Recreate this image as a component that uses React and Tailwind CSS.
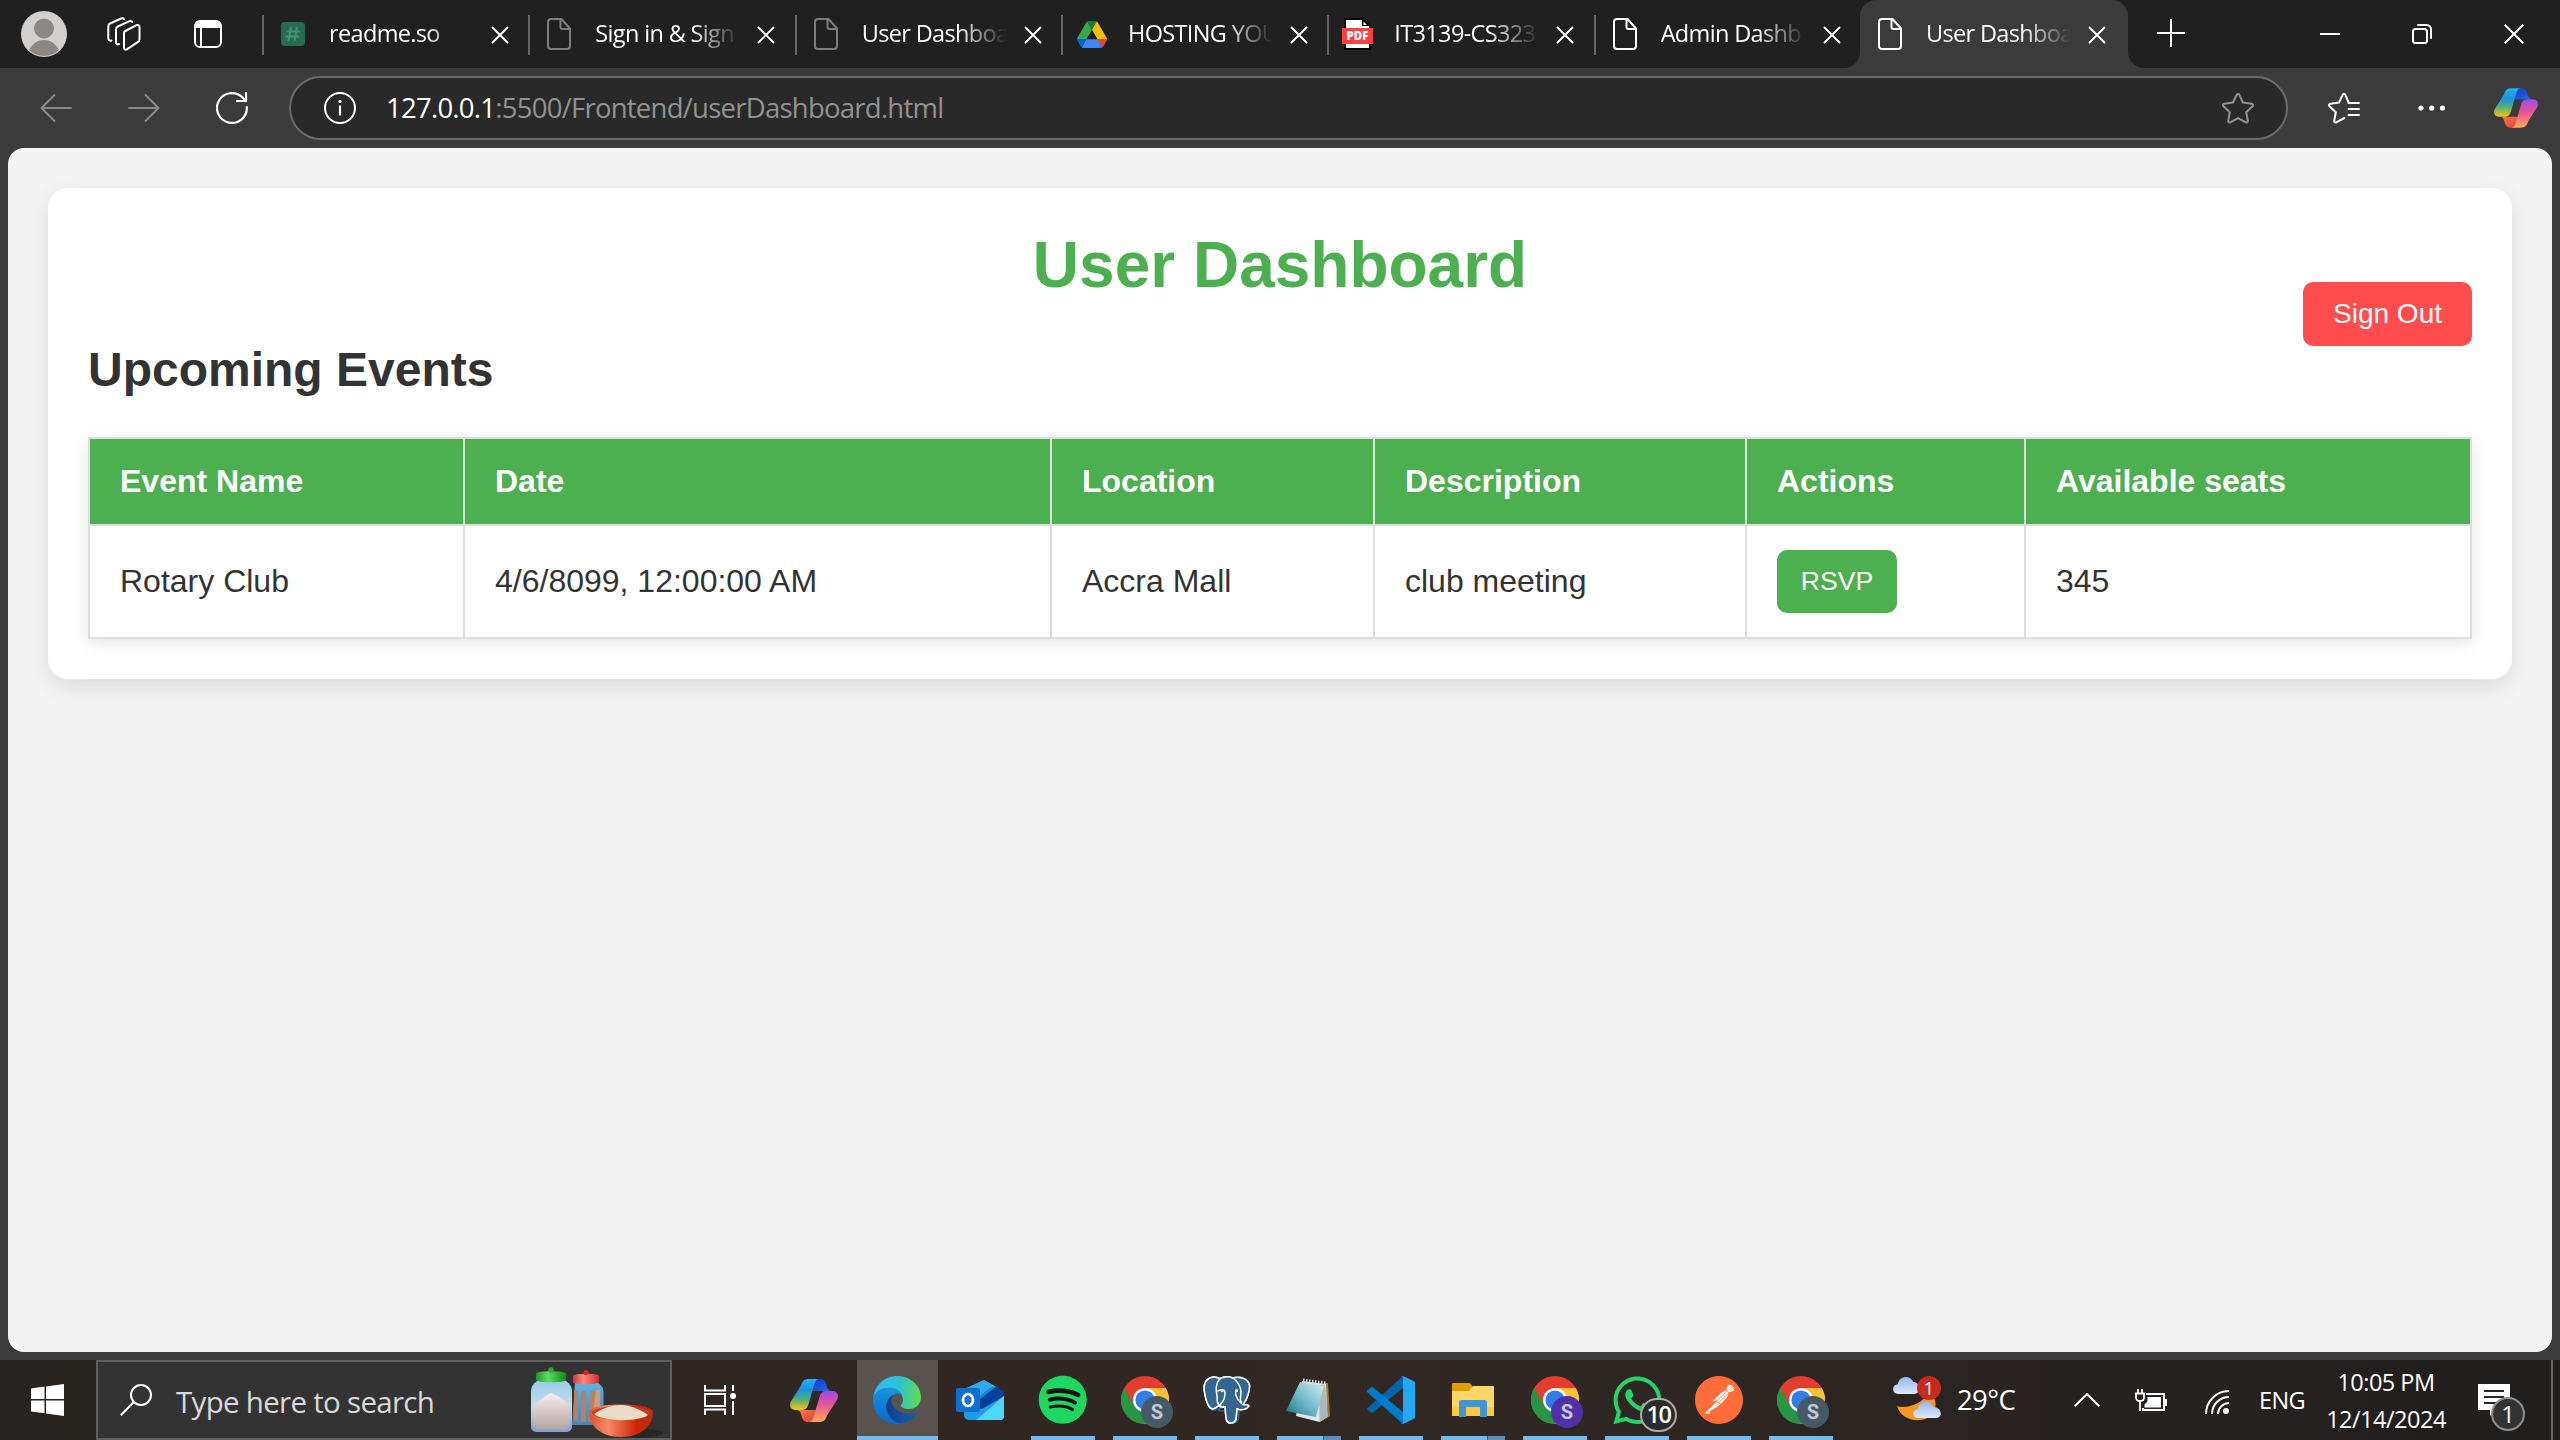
import React from "react";
import { FaSpotify, FaWhatsapp } from "react-icons/fa";
import { SiPostgresql, SiPostman } from "react-icons/si";

const ui = "font-['Open_Sans','Noto_Sans',sans-serif]";

/* ---------- browser icons ---------- */

const CloseIcon = ({ size = 18 }) => (
  <svg width={size} height={size} viewBox="0 0 18 18" fill="none" stroke="#fff" strokeWidth="1.9" strokeLinecap="round">
    <path d="M1.5 1.5l15 15M16.5 1.5l-15 15" />
  </svg>
);

const PageIcon = ({ color }) => (
  <svg width="24" height="32" viewBox="0 0 24 32" fill="none" stroke={color} strokeWidth="2" strokeLinejoin="round">
    <path d="M4 1h10.5L23 10.500V28a3 3 0 0 1-3 3H4a3 3 0 0 1-3-3V4a3 3 0 0 1 3-3z" />
    <path d="M13.500 1v8a2 2 0 0 0 2 2H23" />
  </svg>
);

const ReadmeIcon = () => (
  <svg width="24" height="24" viewBox="0 0 24 24">
    <rect width="24" height="24" rx="4" fill="#286b53" />
    <path d="M10 5L7.500 19M16 5l-2.500 14M5.500 9.500h13.500M4.500 14.500H18" stroke="#3f9273" strokeWidth="2.200" />
  </svg>
);

const DriveIcon = () => (
  <svg width="30" height="27" viewBox="0 0 87.3 78" className="shrink-0">
    <path d="m6.600 66.850 3.850 6.650c.8 1.400 1.950 2.500 3.300 3.300l13.750-23.800h-27.500c0 1.550.4 3.100 1.200 4.500z" fill="#0066da" />
    <path d="m43.650 25-13.750-23.800c-1.350.8-2.500 1.900-3.300 3.300l-25.400 44a9.060 9.060 0 0 0 -1.200 4.500h27.500z" fill="#34a853" />
    <path d="m73.550 76.800c1.350-.8 2.500-1.900 3.300-3.300l1.600-2.750 7.650-13.250c.8-1.400 1.200-2.950 1.200-4.500h-27.502l5.852 11.500z" fill="#ea4335" />
    <path d="m43.650 25 13.750-23.800c-1.350-.8-2.900-1.200-4.500-1.200h-18.500c-1.600 0-3.150.45-4.500 1.200z" fill="#188038" />
    <path d="m59.800 53h-32.300l-13.750 23.800c1.350.8 2.900 1.200 4.500 1.200h50.800c1.600 0 3.150-.45 4.500-1.200z" fill="#4285f4" />
    <path d="m73.400 26.500-12.700-22c-.8-1.400-1.950-2.500-3.300-3.300l-13.750 23.800 16.150 28h27.450c0-1.550-.4-3.100-1.200-4.500z" fill="#fbbc04" />
  </svg>
);

const PdfIcon = () => (
  <svg width="32" height="32" viewBox="0 0 32 32" className="shrink-0">
    <path d="M2 0h19l8 8v24H2z" fill="#000" />
    <path d="M4 2h16v6h7v22H4z" fill="#fff" />
    <path d="M21.500 3.500v3.500H25z" fill="#fff" />
    <rect x="0" y="10" width="31" height="16" fill="#ff4040" />
    <text x="15.5" y="22.300" textAnchor="middle" fontFamily="Open Sans, sans-serif" fontWeight="800" fontSize="11.500" fill="#fff">PDF</text>
  </svg>
);

const WorkspacesIcon = () => (
  <svg width="34" height="34" viewBox="0 0 34 34" fill="none" stroke="#fff" strokeWidth="2" strokeLinejoin="round" strokeLinecap="round">
    <path d="M17.500 14.500l12-6.300c1.800-.8 3 .2 3 2v12c0 1.500-.6 2.400-1.800 3l-10.500 7c-1.700 1-3.200.3-3.200-1.700V16c0-.6.200-1 .5-1.500z" />
    <path d="M12 27c-2 .8-3-.2-3-2V12.500c0-1.500.6-2.400 1.800-3L22.500 4.200c1.200-.5 2.300-.2 2.800.8" />
    <path d="M4.500 23.500c-2 .6-3.200-.4-3.200-2.200V9.500c0-1.500.6-2.400 1.800-3L14 1.500c1.200-.6 2.500-.2 3 .8" />
  </svg>
);

const TabActionsIcon = () => (
  <svg width="28" height="28" viewBox="0 0 28 28">
    <rect x="1" y="1" width="26" height="26" rx="5" fill="none" stroke="#fff" strokeWidth="2" />
    <path d="M1 8V5a4 4 0 0 1 4-4h18a4 4 0 0 1 4 4v3z" fill="#fff" />
    <path d="M7 8v19" stroke="#fff" strokeWidth="2" />
  </svg>
);

const CopilotIcon = ({ width, height }) => (
  <svg width={width} height={height} viewBox="0 0 48 43">
    <defs>
      <linearGradient id="cpLeft" x1="0" y1="0" x2="0" y2="1">
        <stop offset="0" stopColor="#2bb0f5" />
        <stop offset=".35" stopColor="#1593e0" />
        <stop offset=".65" stopColor="#4fae7d" />
        <stop offset="1" stopColor="#f6c80c" />
      </linearGradient>
      <linearGradient id="cpTop" x1="0" y1="0" x2="1" y2="1">
        <stop offset="0" stopColor="#0b3bbf" />
        <stop offset="1" stopColor="#2a6bf0" />
      </linearGradient>
      <linearGradient id="cpRight" x1="0" y1="1" x2="0" y2="0">
        <stop offset="0" stopColor="#9a4be8" />
        <stop offset=".45" stopColor="#e65596" />
        <stop offset="1" stopColor="#fdac55" />
      </linearGradient>
      <linearGradient id="cpBottom" x1="0" y1="0" x2="1" y2="1">
        <stop offset="0" stopColor="#e23c3c" />
        <stop offset="1" stopColor="#fb8048" />
      </linearGradient>
    </defs>
    <path d="M25 0h5.500c3 0 4.700 1.800 5.500 4.500l1.200 4c.6 2.200 2 3.500 4.800 3.500H22z" fill="url(#cpTop)" />
    <path d="M11 6.500C12.300 2 14.500 0 19 0h11c-3.500 0-4.700 2-5.700 5.500L18.500 25c-1.200 4.300-3.200 6-7 6H6C1 31-.8 27.800.5 23z" fill="url(#cpLeft)" />
    <g transform="rotate(180 24 21.500)">
      <path d="M25 0h5.500c3 0 4.700 1.800 5.500 4.500l1.200 4c.6 2.200 2 3.500 4.800 3.500H22z" fill="url(#cpBottom)" />
      <path d="M11 6.500C12.300 2 14.500 0 19 0h11c-3.500 0-4.700 2-5.700 5.500L18.500 25c-1.200 4.300-3.200 6-7 6H6C1 31-.8 27.800.5 23z" fill="url(#cpRight)" />
    </g>
  </svg>
);

/* ---------- taskbar icons ---------- */

const EdgeIcon = () => (
  <svg width="48" height="48" viewBox="0 0 48 48">
    <defs>
      <linearGradient id="edTop" x1="0" y1=".5" x2="1" y2=".6">
        <stop offset="0" stopColor="#35b8f1" />
        <stop offset=".5" stopColor="#2bc3d2" />
        <stop offset="1" stopColor="#62dc4b" />
      </linearGradient>
      <linearGradient id="edLeft" x1="0" y1="0" x2="0" y2="1">
        <stop offset="0" stopColor="#1a93dd" />
        <stop offset="1" stopColor="#0669cf" />
      </linearGradient>
      <linearGradient id="edDark" x1="0" y1="0" x2="1" y2="0">
        <stop offset="0" stopColor="#123f86" />
        <stop offset="1" stopColor="#1560b4" />
      </linearGradient>
    </defs>
    <path d="M.3 22C1.500 9.500 11.500 0 24 0c14 0 24 10.500 24 21 0 7-5 12-12 12-4.500 0-8-1.500-8-3.300 0-1.200 2-2.200 2-5.700 0-6-6-11.500-14-11.500C8 12.500 2 16 .3 22z" fill="url(#edTop)" />
    <path d="M0 24C.5 16 8 11.500 16 11.500c6.500 0 11.500 3.500 13.500 8-2-1.500-4.500-2-6.500-1.500-5 1-8.500 6-8.500 12 0 8 5.500 14.500 13 17.700C25 48 24 48 23 48 10 47.500 0 37 0 24z" fill="url(#edLeft)" />
    <path d="M20.500 18.800c-6 3-8 9-7 14.500 1.500 8 8 13.700 15.500 14.200 6.500-1.300 12.500-5.500 15.500-10.500.6-1-.2-1.600-1.200-1.100-2.300 1.100-5 1.700-7.800 1.700-9.500 0-17-6-17-13 0-2 .6-4.300 2-5.800z" fill="url(#edDark)" />
  </svg>
);

const OutlookIcon = () => (
  <svg width="48" height="40" viewBox="0 0 48 40">
    <path d="M8 9L28 0l14 8-6 5-24 9z" fill="#35b1ee" />
    <path d="M8 10v12l16 2L36 13l6-5L28 0z" fill="#2fa9e8" />
    <path d="M22 20l18-13.500 8 5V18L26 31z" fill="#04409a" />
    <path d="M16 22l18-14 6-1.500L22 21l-4 5z" fill="#1583d8" />
    <path d="M8 24l18 5 22-13v20a4 4 0 0 1-4 4H14c-4 0-6-2-6-5z" fill="#1e9be6" />
    <path d="M20 40l28-24v20a4 4 0 0 1-4 4z" fill="#4fd6fa" />
    <rect x="0" y="8" width="24" height="24" rx="2" fill="#0f6fd0" />
    <ellipse cx="12" cy="20" rx="5" ry="5.800" fill="none" stroke="#fff" strokeWidth="2.800" />
  </svg>
);

const ChromeIcon = ({ badge }) => (
  <span className="relative block h-12 w-12">
    <svg width="48" height="48" viewBox="0 0 48 48">
      <circle cx="24" cy="24" r="24" fill="#e23d2f" />
      <path d="M24 12h20.800A24 24 0 0 1 24 48l10.400-18z" fill="#f9c22e" />
      <path d="M3.200 12A24 24 0 0 0 24 48l10.400-18-20.800 0z" fill="#259645" />
      <path d="M3.200 12l10.400 18L24 12z" fill="#e23d2f" />
      <circle cx="24" cy="24" r="12" fill="#fff" />
      <circle cx="24" cy="24" r="9.600" fill="#2f7de9" />
    </svg>
    <span className={`absolute left-5 top-5 flex h-8 w-8 items-center justify-center rounded-full font-['Roboto',sans-serif] text-[20px] font-bold leading-none text-[#c3c9d4] ${badge}`}>
      S
    </span>
  </span>
);

const PostgresIcon = () => (
  <span className="relative block h-12 w-12">
    <svg width="48" height="48" viewBox="0 0 48 48" className="absolute left-0 top-0">
      <path
        d="M10 1C3 2 0 8 1.500 16 3 25 6 33 10 33c2 0 4-2 6-3.500 1 1.500 3 2 6 1.500.5 5 .5 9 1.500 13 1 4 8 4.500 9.500-1 .8-4 .5-8 1-10 4 1.500 10 .5 12-3-1-1.500-4-1-6-1.500C44 24 47 14 46.500 9 45 2 36 0 30 2 25 0 20 1 17 2.500 15 1.500 12 .7 10 1z"
        fill="#336791"
        stroke="#fff"
        strokeWidth="1.500"
      />
    </svg>
    <SiPostgresql className="absolute left-0 top-0 h-12 w-12 text-[#336791]" />
    <svg width="48" height="48" viewBox="0 0 48 48" className="absolute left-0 top-0" fill="none" stroke="#fff" strokeWidth="1.500" strokeLinecap="round">
      <path d="M10 1C3 2 0 8 1.500 16 3 25 6 33 10 33c2 0 4-2 6-3.500 1 1.500 3 2 6 1.500.5 5 .5 9 1.500 13 1 4 8 4.500 9.500-1 .8-4 .5-8 1-10 4 1.500 10 .5 12-3-1-1.500-4-1-6-1.500C44 24 47 14 46.500 9 45 2 36 0 30 2 25 0 20 1 17 2.500 15 1.500 12 .7 10 1z" />
      <path d="M17 2.500C12 8 13 14 14 20c.5 4-1 6 2 9M30 2c5 4 8 9 8 14 0 5-2 7 .5 11M15 15c3-2 7-2 7 2 0 5-1 7-5 12M34 15c-3 0-1 8 4 12M22 31c-2-1-5 0-6-1.500" />
      <circle cx="19" cy="14.800" r=".8" fill="#fff" />
      <circle cx="33.500" cy="14.500" r=".8" fill="#fff" />
    </svg>
  </span>
);

const NotepadIcon = () => (
  <svg width="46" height="44" viewBox="0 0 46 44">
    <defs>
      <linearGradient id="npBlue" x1="0" y1="1" x2="1" y2="0">
        <stop offset="0" stopColor="#1d6d7c" />
        <stop offset=".45" stopColor="#6cb7c6" />
        <stop offset="1" stopColor="#d5edf2" />
      </linearGradient>
    </defs>
    <path d="M38 5h4l2 33-8 4z" fill="#9c7b3c" />
    <path d="M16 3l24 3 1.500 33-8 5L10 38z" fill="#dfe6e6" />
    <path d="M33 8l6-2 2.500 33-8 5z" fill="#a9b9ba" />
    <path d="M14 4l24 4-8 31L0 33z" fill="url(#npBlue)" />
    <path d="M17 2.500l23 3" stroke="#d7d7d7" strokeWidth="4" strokeDasharray="1.500 1.500" />
  </svg>
);

const CodeIcon = () => (
  <svg width="48" height="48" viewBox="0 0 48 48">
    <path d="M0 33.500l4.500 3.200c.6.400 1.200.3 1.700-.1L36 12V0L1 31.600c-.8.700-.8 1.400-1 1.900z" fill="#0065a9" />
    <path d="M0 14.500L4.500 11.300c.6-.4 1.200-.3 1.700.1L36 36v12L.6 16.500c-.6-.6-.8-1.300-.6-2z" fill="#007acc" />
    <path d="M34 0.800C35 0 36 .1 37 .5L46.500 5C47.500 5.500 48 6.300 48 7.500v33c0 1-.5 2-1.500 2.500L37 47.500c-1 .5-2.400.2-3-.5 1 .6 2-.2 2-1.500V2.500C36 1.200 35 .4 34 .8z" fill="#23a9f2" />
  </svg>
);

const FolderIcon = () => (
  <svg width="42" height="46" viewBox="0 0 42 46">
    <path d="M0 1a1 1 0 0 1 1-1h16a2 2 0 0 1 1.500.8L21 4v6H0z" fill="#e09c06" />
    <path d="M0 7h17l4-4h20a1 1 0 0 1 1 1v28a1 1 0 0 1-1 1H1a1 1 0 0 1-1-1z" fill="#ffd667" />
    <path d="M0 24h42v8a1 1 0 0 1-1 1H1a1 1 0 0 1-1-1z" fill="#fcc93f" />
    <path d="M7 34V25a2 2 0 0 1 2-2h24a2 2 0 0 1 2 2v9h-7v-4a1 1 0 0 0-1-1H15a1 1 0 0 0-1 1v4z" fill="#3e95dc" />
  </svg>
);

const ExplorerIcon = () => (
  <svg width="42" height="34" viewBox="0 0 42 34">
    <path d="M0 1a1 1 0 0 1 1-1h16a2 2 0 0 1 1.500.8L21 4v6H0z" fill="#e09c06" />
    <path d="M0 8h17l4-5h20a1 1 0 0 1 1 1v28a1 1 0 0 1-1 1H1a1 1 0 0 1-1-1z" fill="#ffd667" />
    <path d="M0 24h42v8a1 1 0 0 1-1 1H1a1 1 0 0 1-1-1z" fill="#fcc93f" />
    <path d="M7 34V19a2 2 0 0 1 2-2h24a2 2 0 0 1 2 2v15h-7V25a1 1 0 0 0-1-1H15a1 1 0 0 0-1 1v9z" fill="#3e95dc" />
  </svg>
);

const WhatsAppIcon = () => (
  <span className="relative block h-12 w-12">
    <FaWhatsapp className="absolute -left-[3.400px] -top-[3.400px] h-[54.800px] w-[54.800px] text-[#25d366]" />
    <span className="absolute left-[27px] top-[22px] flex h-[34px] w-[37px] items-center justify-center rounded-full border-2 border-[#a9a9a9] bg-[#2c2c2c] text-[23.5px] font-semibold leading-none tracking-[-1.500px] text-white">
      10
    </span>
  </span>
);

const SpiceJars = () => (
  <svg width="134" height="76" viewBox="0 0 134 76">
    <defs>
      <linearGradient id="jar" x1="0" y1="0" x2="0" y2="1">
        <stop offset="0" stopColor="#9ccbe6" />
        <stop offset=".5" stopColor="#c4def0" />
        <stop offset="1" stopColor="#7f9fcc" />
      </linearGradient>
      <linearGradient id="jar2" x1="0" y1="0" x2="0" y2="1">
        <stop offset="0" stopColor="#5fb2e2" />
        <stop offset="1" stopColor="#4d82bd" />
      </linearGradient>
      <linearGradient id="salt" x1="0" y1="0" x2="0" y2="1">
        <stop offset="0" stopColor="#f6f0ee" />
        <stop offset="1" stopColor="#b5a5a0" />
      </linearGradient>
      <linearGradient id="lidG" x1="0" y1="0" x2="1" y2="0">
        <stop offset="0" stopColor="#1f9428" />
        <stop offset=".4" stopColor="#5fdb62" />
        <stop offset="1" stopColor="#0e8a1c" />
      </linearGradient>
      <linearGradient id="lidR" x1="0" y1="0" x2="1" y2="0">
        <stop offset="0" stopColor="#d13b3b" />
        <stop offset=".4" stopColor="#ff8a84" />
        <stop offset="1" stopColor="#cf2f2f" />
      </linearGradient>
      <linearGradient id="bowl" x1="0" y1="0" x2="1" y2="0">
        <stop offset="0" stopColor="#e2502f" />
        <stop offset=".3" stopColor="#f58a66" />
        <stop offset=".75" stopColor="#cc2304" />
        <stop offset="1" stopColor="#b53012" />
      </linearGradient>
    </defs>
    <ellipse cx="104" cy="66" rx="28" ry="4.500" fill="#262626" />
    <path d="M44 16h23c4 3 5.500 5 5.500 10v26c0 4-2 6-6 6H41z" fill="url(#jar2)" />
    <path d="M43 23l4 1v30l-4-1zM50 24h5v31h-5zM60 24l6 1-6 30-3-1z" fill="#b9805f" />
    <path d="M65 23h4v30h-8z" fill="#d19b78" />
    <path d="M42 9c0-3 26-3 26 0v6c0 3-26 3-26 0z" fill="url(#lidR)" />
    <circle cx="55" cy="5.500" r="2.600" fill="#e51c24" />
    <path d="M6 14h29c4 3 6 6 6 11v34c0 4-2 6-7 6H7c-5 0-7-2-7-6V25c0-5 2-8 6-11z" fill="url(#jar)" />
    <path d="M3 38c5-4 11-9 17-12 6 2 13 7 18 12v21c0 2-2 3-4 3H7c-2 0-4-1-4-3z" fill="url(#salt)" />
    <path d="M5 6.500c0-3 30-3 30 0V13c0 3-30 3-30 0z" fill="url(#lidG)" />
    <circle cx="20" cy="3" r="2.800" fill="#25a83c" />
    <path d="M58 45c0-10 64-10 64 0 0 14-12 25-32 25S58 59 58 45z" fill="url(#bowl)" />
    <ellipse cx="90" cy="46" rx="29" ry="7" fill="#c63b1c" />
    <path d="M63 47c8-6 19-9 27-9s19 4 27 10c-8 7-46 7-54-1z" fill="#e9dcc6" />
  </svg>
);

const WeatherIcon = () => (
  <span className="relative block h-12 w-12">
    <svg width="48" height="48" viewBox="0 0 48 48">
      <defs>
        <linearGradient id="cloud" x1="0" y1="0" x2="0" y2="1">
          <stop offset="0" stopColor="#8fb4f2" />
          <stop offset="1" stopColor="#dfe9fb" />
        </linearGradient>
      </defs>
      <path d="M4 30c8 3 26-1 32-15 11 9 8 27-8 29C16 45 7 40 4 30z" fill="#f5961d" />
      <path d="M5 18c-6 0-7-9 0-10C6-1 18-1 20 6c7-1 9 12 1 12z" fill="url(#cloud)" />
      <path d="M25 42c-6 0-7-8 0-9 1-10 13-10 15-2 9 0 11 11 2 11z" fill="url(#cloud)" />
    </svg>
    <span className="absolute left-6 top-0 flex h-6 w-6 items-center justify-center rounded-full bg-[#c42b1c] text-[18px] leading-none text-white">
      1
    </span>
  </span>
);

/* ---------- browser chrome ---------- */

const tabs = [
  { title: "readme.so", icon: <ReadmeIcon /> },
  { title: "Sign in & Sign", icon: <PageIcon color="#7d7d7d" /> },
  { title: "User Dashboa", icon: <PageIcon color="#7d7d7d" /> },
  { title: "HOSTING YOU", icon: <DriveIcon /> },
  { title: "IT3139-CS323", icon: <PdfIcon /> },
  { title: "Admin Dashb", icon: <PageIcon color="#fff" /> },
];

function TabContent({ title, icon }) {
  return (
    <>
      <span className="flex w-6 shrink-0 items-center justify-center">{icon}</span>
      <span className="ml-[24px] w-[145px] overflow-hidden whitespace-nowrap pb-[2px] text-[23.5px] leading-9 tracking-[-0.65px] text-white [mask-image:linear-gradient(to_right,#000_66%,transparent_100%)]">
        {title}
      </span>
      <span className="ml-[17px] mt-[2px]">
        <CloseIcon />
      </span>
    </>
  );
}

function TabStrip() {
  return (
    <div className="flex h-[68px] shrink-0 bg-[#202020]">
      <div className="flex w-[262px] shrink-0 items-center pl-[21px]">
        <svg width="46" height="46" viewBox="0 0 46 46">
          <defs>
            <clipPath id="avatarClip"><circle cx="23" cy="23" r="22" /></clipPath>
          </defs>
          <circle cx="23" cy="23" r="23" fill="#d2d0ce" />
          <g clipPath="url(#avatarClip)" fill="#8d8885">
            <circle cx="23" cy="17.500" r="10" />
            <circle cx="23" cy="45" r="16" />
          </g>
        </svg>
        <span className="ml-[40px]"><WorkspacesIcon /></span>
        <span className="ml-[53px]"><TabActionsIcon /></span>
      </div>
      {tabs.map((tab) => (
        <div key={tab.title} className="flex w-[266.330px] shrink-0 items-center">
          <span className="mr-[17px] mt-[2px] h-10 w-[2px] bg-[#666]" />
          <TabContent {...tab} />
        </div>
      ))}
      <div className="relative flex w-[268px] shrink-0 items-center rounded-t-2xl bg-[#3b3b3b] pl-[18px]">
        <svg className="absolute -left-4 bottom-0" width="16" height="16"><path d="M16 0v16H0A16 16 0 0 0 16 0z" fill="#3b3b3b" /></svg>
        <svg className="absolute -right-4 bottom-0" width="16" height="16"><path d="M0 0v16h16A16 16 0 0 1 0 0z" fill="#3b3b3b" /></svg>
        <TabContent title="User Dashboa" icon={<PageIcon color="#fff" />} />
      </div>
      <div className="flex flex-1 items-center pl-[29px]">
        <svg width="28" height="28" viewBox="0 0 28 28" stroke="#fff" strokeWidth="2" className="-mt-[2px]">
          <path d="M14 0v28M0 14h28" />
        </svg>
        <svg width="20" height="20" viewBox="0 0 20 20" stroke="#fff" strokeWidth="2" className="ml-[135px]">
          <path d="M0 10h20" />
        </svg>
        <svg width="20" height="20" viewBox="0 0 20 20" fill="none" stroke="#fff" strokeWidth="2" strokeLinecap="round" className="ml-[72px]">
          <rect x="1" y="5" width="14" height="14" rx="2.500" />
          <path d="M6 1h8.500a4.500 4.500 0 0 1 4.500 4.500V14" />
        </svg>
        <svg width="20" height="20" viewBox="0 0 20 20" stroke="#fff" strokeWidth="2" className="ml-[72px]">
          <path d="M.7.7l18.600 18.600M19.300.7L.7 19.300" />
        </svg>
      </div>
    </div>
  );
}

function Toolbar() {
  return (
    <div className="flex h-20 shrink-0 items-center bg-[#3b3b3b] pl-10">
      <svg width="32" height="28" viewBox="0 0 32 28" fill="none" stroke="#8a8a8a" strokeWidth="2" strokeLinecap="round" strokeLinejoin="round">
        <path d="M31 14H1.500M14.500 1L1.500 14l13 13" />
      </svg>
      <svg width="32" height="28" viewBox="0 0 32 28" fill="none" stroke="#8a8a8a" strokeWidth="2" strokeLinecap="round" strokeLinejoin="round" className="ml-14">
        <path d="M1 14h29.500M17.500 1l13 13-13 13" />
      </svg>
      <svg width="32" height="32" viewBox="0 0 32 32" fill="none" stroke="#fff" strokeWidth="2.200" strokeLinecap="round" strokeLinejoin="round" className="ml-14">
        <path d="M30.800 15a14.900 14.900 0 1 1-4.300-9.500L30 9M30 1.200V9h-9" />
      </svg>
      <div className="ml-[41px] flex h-16 w-[1999px] items-center rounded-full border-2 border-[#6b6b6b] bg-[#292929] pl-[33px] pr-8">
        <svg width="32" height="32" viewBox="0 0 32 32" fill="none" stroke="#fff" strokeWidth="2">
          <circle cx="16" cy="16" r="15" />
          <path d="M16 13.500v10" strokeWidth="2.200" />
          <circle cx="16" cy="9.500" r="1.600" fill="#fff" stroke="none" />
        </svg>
        <span className="ml-[30px] flex-1 text-[27.5px] leading-none tracking-[-0.75px] text-[#929292]">
          <span className="text-white">127.0.0.1</span>:5500/Frontend/userDashboard.html
        </span>
        <svg width="32" height="31" viewBox="0 0 32 31" fill="none" stroke="#929292" strokeWidth="2" strokeLinejoin="round">
          <path d="M14.700 1.800c.5-1.100 2.100-1.100 2.600 0l3.700 7.700 8.600 1.200c1.300.2 1.800 1.600.9 2.500l-6.300 6 1.600 8.600c.2 1.200-1 2-2.100 1.500L16 25.200l-7.700 4.100c-1.100.5-2.300-.3-2.100-1.500l1.600-8.600-6.300-6c-.9-.9-.4-2.300.9-2.500L11 9.500z" />
        </svg>
      </div>
      <svg width="32" height="31" viewBox="0 0 32 31" fill="none" stroke="#fff" strokeWidth="2" strokeLinejoin="round" strokeLinecap="round" className="ml-10">
        <path d="M20.500 9l-3.200-7.200c-.5-1.100-2.100-1.100-2.600 0L11 9.500l-8.600 1.200c-1.300.2-1.800 1.600-.9 2.500l6.300 6-1.600 8.600c-.2 1.200 1 2 2.100 1.500l8-4.300" />
        <path d="M20.500 10H31M20.500 16H31M20.500 22H31" />
      </svg>
      <svg width="28" height="6" viewBox="0 0 28 6" fill="#fff" className="ml-[58px]">
        <circle cx="3" cy="3" r="2.600" />
        <circle cx="13.700" cy="3" r="2.600" />
        <circle cx="24.500" cy="3" r="2.600" />
      </svg>
      <span className="ml-[48px]"><CopilotIcon width={44} height={40} /></span>
    </div>
  );
}

/* ---------- web page ---------- */

const headCell = "flex h-[87px] items-center border-l-2 border-t-2 border-[#ddd] bg-[#4caf50] pl-[30px] font-bold text-white";
const bodyCell = "flex h-[113px] items-center border-l-2 border-t-2 border-[#ddd] bg-white pl-[30px]";
const headings = ["Event Name", "Date", "Location", "Description", "Actions", "Available seats"];

function DashboardPage() {
  return (
    <main className="mx-2 mb-2 flex-1 rounded-2xl bg-[#f4f4f4] p-10 font-['Liberation_Sans',Arial,sans-serif] text-[#333]">
      <section className="rounded-[20px] bg-white p-10 shadow-[0_8px_24px_rgba(0,0,0,0.1)]">
        <header className="mb-10 grid">
          <div className="[grid-area:1/1]">
            <h1 className="mb-10 text-center text-[64px] font-bold leading-[74px] text-[#4caf50]">User Dashboard</h1>
            <h2 className="text-[48px] font-bold leading-[55px]">Upcoming Events</h2>
          </div>
          <button className="mt-[54px] h-16 self-start justify-self-end rounded-[10px] bg-[#ff4d4d] px-[30px] text-[28px] leading-8 text-white [grid-area:1/1]">
            Sign Out
          </button>
        </header>
        <div className="grid grid-cols-[375px_587px_323px_372px_279px_446px] border-b-2 border-r-2 border-[#ddd] text-[32px] leading-[37px] shadow-[0_4px_16px_rgba(0,0,0,0.1)]">
          {headings.map((h) => (
            <div key={h} className={headCell}>{h}</div>
          ))}
          <div className={bodyCell}>Rotary Club</div>
          <div className={bodyCell}>4/6/8099, 12:00:00 AM</div>
          <div className={bodyCell}>Accra Mall</div>
          <div className={bodyCell}>club meeting</div>
          <div className={bodyCell}>
            <button className="h-[63px] w-[120px] rounded-[10px] bg-[#4caf50] pb-px text-center text-[26.667px] leading-[31px] text-white">RSVP</button>
          </div>
          <div className={bodyCell}>345</div>
        </div>
      </section>
    </main>
  );
}

/* ---------- taskbar ---------- */

const apps = [
  { id: "spotify", icon: <span className="relative flex h-12 w-12 items-center justify-center"><span className="absolute inset-1 rounded-full bg-[#121212]" /><FaSpotify className="relative h-[49.500px] w-[49.500px] shrink-0 text-[#1ed760]" /></span> },
  { id: "chrome-a", icon: <ChromeIcon badge="bg-[#455a64]" /> },
  { id: "postgres", icon: <PostgresIcon /> },
  { id: "notepad", icon: <NotepadIcon />, stacked: true },
  { id: "code", icon: <CodeIcon /> },
  { id: "files", icon: <ExplorerIcon />, stacked: true },
  { id: "chrome-b", icon: <ChromeIcon badge="bg-[#5030a8]" /> },
  { id: "whatsapp", icon: <WhatsAppIcon /> },
  { id: "postman", icon: <span className="relative flex h-12 w-12 items-center justify-center"><span className="absolute inset-1 rounded-full bg-white" /><SiPostman className="relative h-12 w-12 text-[#ff6c37]" /></span> },
  { id: "chrome-c", icon: <ChromeIcon badge="bg-[#455a64]" /> },
];

function Taskbar() {
  return (
    <footer className="flex h-20 shrink-0 bg-[linear-gradient(to_right,#272421_0%,#302722_25%,#312823_55%,#2a2522_75%,#211f1e_95%)] text-white">
      <div className="flex w-24 items-center pl-[31px]">
        <svg width="33" height="32" viewBox="0 0 33 32" fill="#fff">
          <path d="M0 4.500L13.500 2.600V15H0zM15 2.400L33 0v15H15zM0 16.500h13.500v12.700L0 27.400zM15 16.500h18V32l-18-2.500z" />
        </svg>
      </div>
      <div className="flex w-[576px] items-center border-2 border-[#5f5f5f] bg-[#333] pl-[22px]">
        <svg width="32" height="32" viewBox="0 0 32 32" fill="none" stroke="#fff" strokeWidth="2">
          <circle cx="21" cy="11" r="10" />
          <path d="M13.800 18L.8 31.200" />
        </svg>
        <span className="ml-6 w-[355px] pt-[3px] text-[29.5px] leading-none tracking-[-0.7px] text-[#d9d9d9]">Type here to search</span>
        <span className="mt-[10px]"><SpiceJars /></span>
      </div>
      <div className="flex w-24 items-center justify-center">
        <svg width="32" height="30" viewBox="0 0 32 30" fill="none" stroke="#fff" strokeWidth="2">
          <path d="M1 0v5.500h20V0M1 30v-5.500h20V30M1 9h20v12H1zM29 0v6M29 16v14" />
          <circle cx="29" cy="11" r="3" fill="#fff" stroke="none" />
        </svg>
      </div>
      <div className="flex w-[89px] items-center justify-center pl-[3px]">
        <CopilotIcon width={48} height={43} />
      </div>
      <div className="flex w-[81px] flex-col bg-[#5a524d]">
        <div className="flex flex-1 items-center justify-center pr-px pt-1"><EdgeIcon /></div>
        <div className="h-1 bg-[#76b9ed]" />
      </div>
      <div className="flex w-[84px] items-center justify-center"><OutlookIcon /></div>
      {apps.map((app) => (
        <div key={app.id} className="flex w-[82px] flex-col items-center">
          <div className="flex flex-1 items-center justify-center pt-1">{app.icon}</div>
          <div className="flex h-1 w-16 bg-[#76b9ed]">
            {app.stacked && <div className="ml-auto w-[18px] border-l border-[#3f5f78] bg-[#5b8fb9]" />}
          </div>
        </div>
      ))}
      <div className="ml-[51px] flex w-[181px] items-center">
        <WeatherIcon />
        <span className="ml-4 text-[27.5px] tracking-[-0.6px]">29°C</span>
      </div>
      <div className="flex w-[61px] items-center">
        <svg width="26" height="14" viewBox="0 0 26 14" fill="none" stroke="#fff" strokeWidth="2"><path d="M.7 13.300L13 1l12.300 12.300" /></svg>
      </div>
      <div className="flex w-[70px] items-center">
        <svg width="32" height="23" viewBox="0 0 32 23" fill="none" stroke="#fff" strokeWidth="2">
          <path d="M11 5h18v16H8v-2M31 10v7" />
          <path d="M12.500 8H26v10.500H9.500v-3l3-3z" fill="#fff" stroke="none" />
          <path d="M3 0v4M7 0v4M1 4.500h8v4c0 2-1.500 3.500-4 3.500s-4-1.500-4-3.500zM5 12v10" strokeWidth="1.800" />
        </svg>
      </div>
      <div className="flex w-[54px] items-center pt-1">
        <svg width="24" height="24" viewBox="0 0 24 24" fill="none" stroke="#fff" strokeWidth="2">
          <path d="M1 24A23 23 0 0 1 24 1M7 24A17 17 0 0 1 24 7M13 24A11 11 0 0 1 24 13" />
          <circle cx="21" cy="21" r="3" fill="#fff" stroke="none" />
        </svg>
      </div>
      <div className="flex w-[55px] items-center pt-px text-[23.5px] tracking-[-0.6px]">ENG</div>
      <div className="flex w-[144px] flex-col items-center justify-center pt-[2px] text-[23.5px] leading-[37px] tracking-[-0.5px]">
        <span>10:05 PM</span>
        <span>12/14/2024</span>
      </div>
      <div className="relative ml-[20px] flex w-[73px] items-center">
        <svg width="32" height="32" viewBox="0 0 32 32">
          <path d="M0 0h32v26H18l-6 6v-6H0z" fill="#fff" />
          <path d="M6 7h20M6 13h20M6 19h12" stroke="#2a2624" strokeWidth="2" />
        </svg>
        <span className="absolute left-[13px] top-[37px] flex h-[34px] w-[34px] items-center justify-center rounded-full border-2 border-[#8f8f8f] bg-[#333] text-[24px] leading-none">
          1
        </span>
      </div>
      <div className="w-[2px] bg-[#6a6867]" />
    </footer>
  );
}

export default function App() {
  return (
    <div className={`flex h-[1440px] w-[2560px] flex-col overflow-hidden bg-[#3b3b3b] ${ui}`}>
      <TabStrip />
      <Toolbar />
      <DashboardPage />
      <Taskbar />
    </div>
  );
}
